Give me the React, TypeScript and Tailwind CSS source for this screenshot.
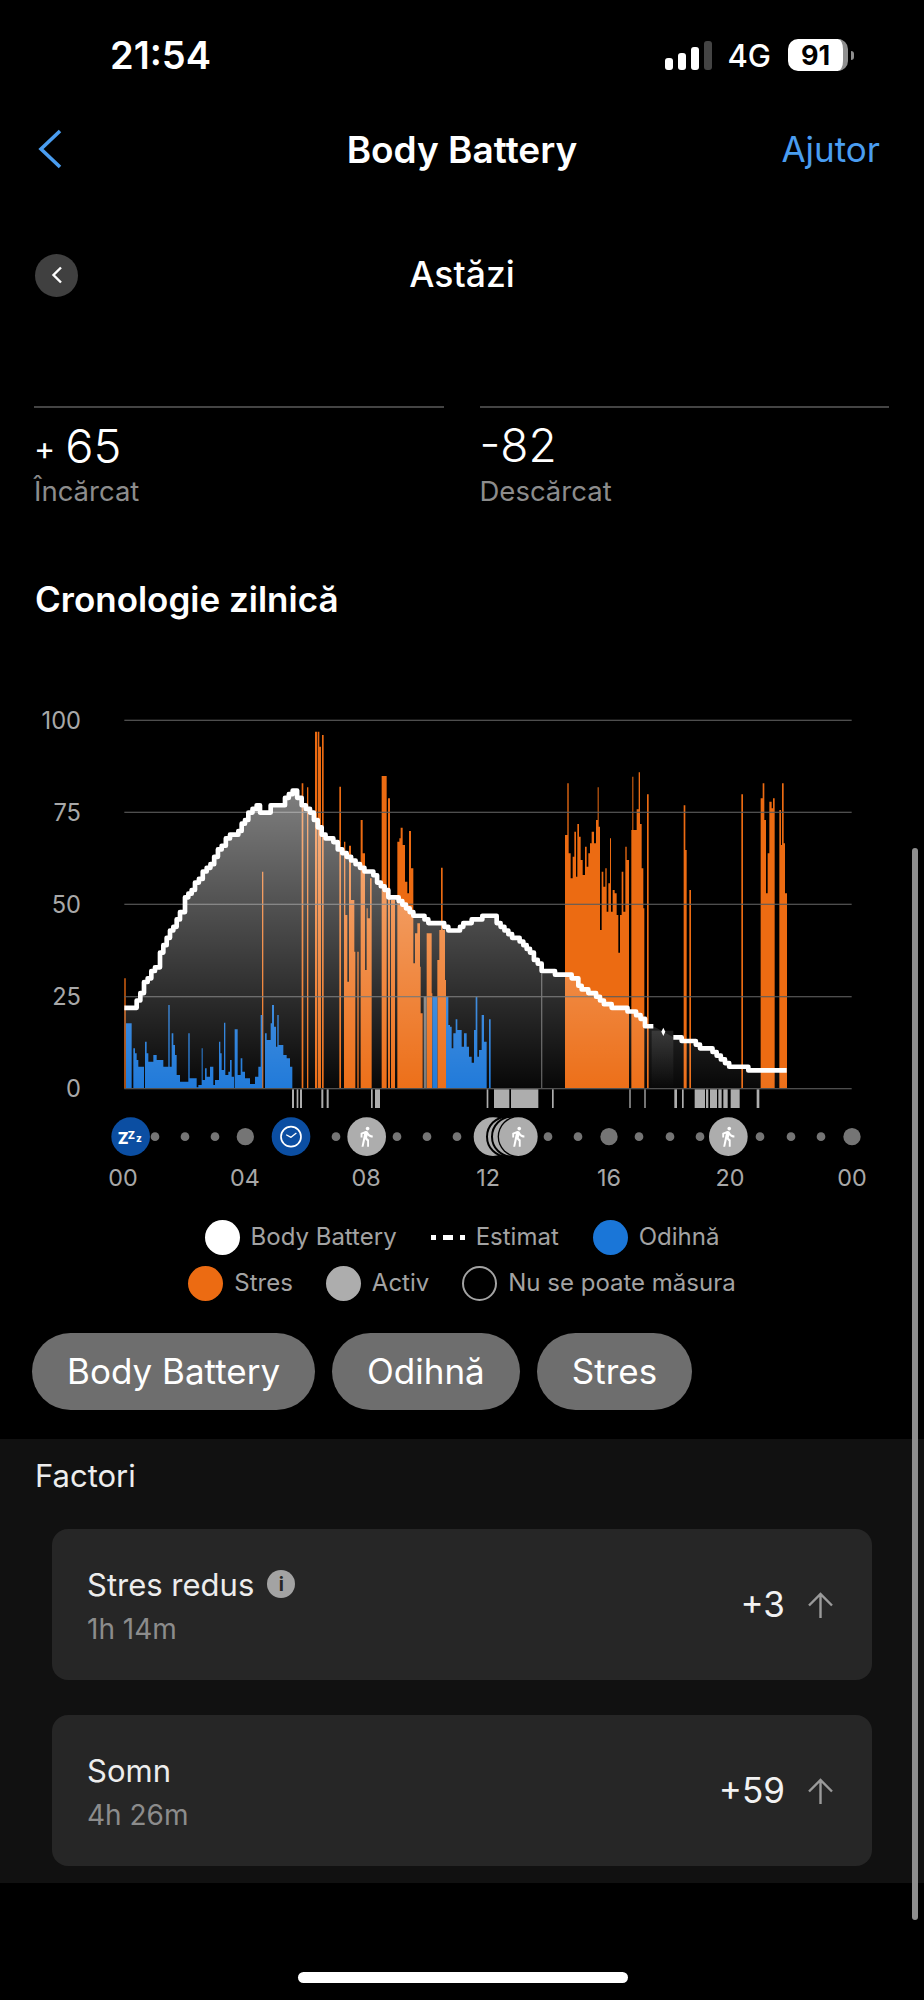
const BASE = 1226;
const R = 1380; // right half of the chart, offset in chart units

type Bar = [number, number, number];

const blue: Bar[] = [
  [378, 395, 1030], [400, 405, 1105], [405, 410, 1120], [410, 415, 1140], [415, 432, 1160], [435, 440, 1085], [440, 445, 1120],
  [445, 460, 1145], [460, 470, 1125], [470, 490, 1140], [490, 505, 1160], [505, 509, 975], [509, 515, 1160], [515, 520, 1060],
  [520, 525, 1095], [525, 530, 1125], [530, 540, 1185], [540, 565, 1205], [565, 569, 1060], [569, 590, 1195], [590, 595, 1222],
  [595, 605, 1215], [605, 608, 1105], [608, 615, 1200], [615, 620, 1165], [620, 630, 1190], [630, 640, 1160], [640, 645, 1215],
  [645, 657, 1200], [657, 661, 1085], [661, 665, 1120], [665, 672, 1170], [672, 676, 1028], [676, 685, 1185], [685, 690, 1175],
  [690, 695, 1140], [695, 702, 1190], [704, 713, 1048], [713, 722, 1185], [722, 727, 1135], [727, 735, 1175], [735, 750, 1195],
  [750, 765, 1212], [765, 775, 1190], [775, 782, 1160], [782, 787, 1005], [795, 800, 1060], [800, 812, 1080], [812, 816, 1030],
  [816, 822, 975], [822, 828, 1040], [828, 832, 1100], [832, 836, 1005], [836, 850, 1095], [850, 860, 1125], [860, 870, 1135],
  [870, 877, 1160], [1297, 1312, 950], [1338, 1345, 950], [1345, 1350, 1035], [1350, 1355, 1040], [1355, 1360, 1105],
  [1360, 1367, 1060], [1367, 1372, 1018], [1372, 1380, 1050],
  [R + 0, R + 5, 1050], [R + 5, R + 12, 1100], [R + 12, R + 20, 1060], [R + 20, R + 27, 1100], [R + 27, R + 35, 1130],
  [R + 35, R + 42, 1148], [R + 42, R + 47, 1050], [R + 47, R + 52, 950], [R + 52, R + 57, 1130], [R + 57, R + 65, 1110],
  [R + 65, R + 72, 1005], [R + 72, R + 80, 1085], [R + 87, R + 92, 1018],
];

const orange: Bar[] = [
  [373, 377, 895], [786, 790, 575], [905, 910, 310], [921, 925, 322], [945, 951, 155], [953, 958, 155], [958, 963, 200], [966, 971, 165],
  [1018, 1023, 320], [1032, 1036, 485], [1036, 1042, 705], [1042, 1047, 905], [1047, 1053, 497], [1053, 1063, 660], [1063, 1066, 815],
  [1072, 1076, 815], [1082, 1088, 420], [1088, 1095, 520], [1095, 1100, 870], [1100, 1103, 685], [1103, 1110, 715], [1110, 1115, 595],
  [1145, 1160, 288], [1164, 1170, 355], [1173, 1185, 660], [1192, 1198, 485], [1198, 1202, 475], [1202, 1208, 443], [1208, 1215, 495],
  [1215, 1222, 605], [1222, 1227, 640], [1227, 1233, 453], [1233, 1240, 565], [1240, 1245, 850], [1245, 1252, 760], [1252, 1260, 730],
  [1260, 1262, 860], [1262, 1268, 1000], [1280, 1295, 760], [1295, 1297, 940], [1312, 1318, 840], [1318, 1323, 750], [1323, 1328, 563],
  [1328, 1335, 750], [1335, 1338, 900],
  [R + 315, R + 322, 465], [R + 322, R + 326, 310], [R + 326, R + 332, 520], [R + 332, R + 338, 595], [R + 338, R + 343, 530],
  [R + 343, R + 348, 455], [R + 348, R + 352, 590], [R + 352, R + 357, 432], [R + 357, R + 362, 470], [R + 362, R + 368, 540],
  [R + 368, R + 375, 585], [R + 375, R + 380, 500], [R + 380, R + 385, 560], [R + 385, R + 390, 520], [R + 390, R + 395, 490],
  [R + 395, R + 402, 455], [R + 402, R + 408, 490], [R + 408, R + 413, 420], [R + 413, R + 416, 322], [R + 416, R + 420, 440],
  [R + 420, R + 425, 750], [R + 425, R + 430, 575], [R + 430, R + 436, 620], [R + 436, R + 440, 565], [R + 440, R + 445, 695],
  [R + 445, R + 450, 610], [R + 450, R + 453, 475], [R + 453, R + 458, 695], [R + 458, R + 464, 630], [R + 464, R + 470, 640],
  [R + 470, R + 475, 705], [R + 475, R + 480, 818], [R + 480, R + 485, 705], [R + 485, R + 490, 575], [R + 490, R + 496, 695],
  [R + 496, R + 500, 500], [R + 500, R + 507, 540], [R + 514, R + 517, 450], [R + 517, R + 520, 290], [R + 520, R + 530, 450],
  [R + 530, R + 536, 388], [R + 536, R + 540, 277], [R + 540, R + 545, 432], [R + 545, R + 550, 565], [R + 550, R + 553, 685],
  [R + 561, R + 566, 343], [R + 671, R + 676, 376], [R + 676, R + 680, 510], [R + 688, R + 693, 630], [R + 844, R + 849, 343],
  [R + 902, R + 908, 355], [R + 908, R + 913, 310], [R + 913, R + 918, 420], [R + 918, R + 923, 640], [R + 923, R + 928, 520],
  [R + 928, R + 935, 365], [R + 935, R + 939, 385], [R + 939, R + 944, 355], [R + 958, R + 963, 390], [R + 963, R + 966, 495],
  [R + 966, R + 971, 310], [R + 971, R + 975, 490], [R + 975, R + 981, 640],
];

const activeTicks: [number, number][] = [
  [876, 882], [890, 895], [900, 906], [964, 970], [980, 986], [1113, 1118], [1125, 1140],
  [R + 80, R + 85], [R + 102, R + 148], [R + 153, R + 235], [R + 276, R + 281], [R + 508, R + 512], [R + 553, R + 557],
  [R + 643, R + 651], [R + 666, R + 671], [R + 704, R + 735], [R + 738, R + 745], [R + 750, R + 771], [R + 775, R + 785],
  [R + 790, R + 803], [R + 812, R + 839], [R + 890, R + 898],
];

const lineA: [number, number][] = [
  [373, 983], [398, 983], [410, 965], [432, 910], [465, 860], [480, 815], [510, 755], [540, 695], [555, 655], [585, 610], [620, 565],
  [665, 495], [690, 465], [715, 453], [745, 400], [770, 378], [780, 398], [805, 398], [812, 377], [845, 375], [855, 350], [878, 330],
  [905, 372], [930, 395], [965, 460], [1000, 490], [1040, 530], [1080, 560], [1120, 590], [1165, 650], [1185, 652], [1240, 707],
  [1262, 707], [1285, 732], [1320, 732], [1345, 752], [1370, 752], [R + 0, 737], [R + 30, 730], [R + 35, 717], [R + 60, 717],
  [R + 67, 705], [R + 100, 705], [R + 110, 730], [R + 145, 760], [R + 190, 795], [R + 210, 820], [R + 245, 872], [R + 280, 872],
  [R + 285, 884], [R + 315, 884], [R + 345, 900], [R + 365, 930], [R + 385, 935], [R + 420, 962], [R + 455, 983], [R + 490, 985],
  [R + 515, 995], [R + 555, 1035], [R + 580, 1047],
];
const lineB: [number, number][] = [
  [R + 640, 1070], [R + 665, 1082], [R + 695, 1085], [R + 720, 1102], [R + 745, 1102], [R + 795, 1150], [R + 820, 1160], [R + 860, 1160],
  [R + 865, 1170], [R + 980, 1170],
];

// the line moves by whole values, so it reads as a staircase
function stairs(pts: [number, number][]) {
  const step = 11.05;
  const out: [number, number][] = [];
  for (let i = 0; i < pts.length - 1; i++) {
    const [x0, y0] = pts[i];
    const [x1, y1] = pts[i + 1];
    const n = Math.max(1, Math.round((x1 - x0) / 12));
    for (let k = 0; k < n; k++) {
      const x = x0 + ((x1 - x0) * k) / n;
      const y = Math.round((y0 + ((y1 - y0) * k) / n) / step) * step;
      if (out.length) out.push([x, out[out.length - 1][1]]);
      out.push([x, y]);
    }
  }
  const last = pts[pts.length - 1];
  out.push([last[0], out[out.length - 1][1]]);
  return out;
}

const stairA = stairs(lineA);
const stairB = stairs(lineB);
const toPoints = (p: [number, number][]) => p.map(([x, y]) => `${x.toFixed(1)},${y.toFixed(1)}`).join(" ");
const areaPoints = `373,${BASE} ${toPoints(stairA)} ${toPoints(stairB)} ${R + 980},${BASE}`;
// one path per colour, so neighbouring columns leave no seam
const barPath = (bars: Bar[]) => bars.map(([a, b, top]) => `M${a} ${BASE}V${top}H${b}V${BASE}Z`).join("");

const yLabels: [string, number][] = [["100", 121], ["75", 397], ["50", 673], ["25", 950], ["0", 1226]];
const xLabels: [string, number][] = [["00", 369], ["04", 735], ["08", 1098], ["12", 1464], ["16", 1827], ["20", 2190], ["00", 2556]];
const smallDots = [465, 555, 645, 1008, 1191, 1281, 1371, 1644, 1734, 1917, 2010, 2100, 2280, 2373, 2463];
const bigDots = [736, 1827, 2556];

function WalkMarker({ x }: { x: number }) {
  return (
    <g>
      <circle cx={x} cy={1370} r={58} fill="#adadad" />
      <path
        transform={`translate(${x - 35},${1370 - 34}) scale(2.8)`}
        fill="#fff"
        d="M13.5 5.5c1.1 0 2-.9 2-2s-.9-2-2-2-2 .9-2 2 .9 2 2 2zM9.8 8.9L7 23h2.1l1.8-8 2.1 2v6h2v-7.5l-2.1-2 .6-3C14.8 12 16.8 13 19 13v-2c-1.9 0-3.5-1-4.3-2.4l-1-1.6c-.4-.6-1-1-1.7-1-.3 0-.5.1-.8.1L6 8.3V13h2V9.6l1.8-.7"
      />
    </g>
  );
}

function Chart() {
  return (
    <svg viewBox="0 0 2772 1560" className="block w-[924px] h-[520px] shrink-0">
      <defs>
        <linearGradient id="area" gradientUnits="userSpaceOnUse" x1="0" y1="330" x2="0" y2={BASE}>
          <stop offset="0" stopColor="#fff" stopOpacity="0.5" />
          <stop offset="1" stopColor="#fff" stopOpacity="0.03" />
        </linearGradient>
        <linearGradient id="gap" gradientUnits="userSpaceOnUse" x1="0" y1="1052" x2="0" y2={BASE}>
          <stop offset="0" stopColor="#fff" stopOpacity="0.12" />
          <stop offset="1" stopColor="#fff" stopOpacity="0" />
        </linearGradient>
      </defs>

      <path d={barPath(orange)} fill="#ec6b12" />
      <path d={barPath(blue)} fill="#1a76d8" />
      <rect x={1271} y={950} width={9} height={276} fill="#777" />
      <rect x={R + 243} y={880} width={4} height={346} fill="#555" />

      {yLabels.map(([label, y]) => (
        <g key={label}>
          <rect x={373} y={y - 2} width={2182} height={4} fill={y === BASE ? "#4d4d4d" : "#5c5c5c"} fillOpacity={y === BASE ? 1 : 0.85} />
          <text x={243} y={y + 25} textAnchor="end" fontSize={71} fill="#a8a8a8">
            {label}
          </text>
        </g>
      ))}

      <polygon points={areaPoints} fill="url(#area)" />
      <rect x={1955} y={1052} width={65} height={174} fill="url(#gap)" />

      <g fill="none" stroke="#fff" strokeWidth={14} strokeLinejoin="round">
        <polyline points={toPoints(stairA)} />
        <polyline points={toPoints(stairB)} />
      </g>
      <path d="M1990 1043L1996 1055L1990 1068L1984 1055Z" fill="#fff" />

      {activeTicks.map(([a, b]) => (
        <rect key={`t${a}`} x={a} y={BASE + 2} width={b - a} height={56} fill="#adadad" />
      ))}

      {smallDots.map((x) => (
        <circle key={x} cx={x} cy={1370} r={13} fill="#757575" />
      ))}
      {bigDots.map((x) => (
        <circle key={x} cx={x} cy={1370} r={26} fill="#757575" />
      ))}

      <circle cx={392} cy={1370} r={58} fill="#0b4ea2" />
      <text x={353} y={1392} fontSize={48} fontWeight={800} fill="#fff">Z</text>
      <text x={383} y={1378} fontSize={32} fontWeight={800} fill="#fff">Z</text>
      <text x={408} y={1385} fontSize={30} fontWeight={800} fill="#fff">z</text>

      <circle cx={873} cy={1370} r={58} fill="#0b4ea2" />
      <circle cx={873} cy={1370} r={30} fill="none" stroke="#fff" strokeWidth={5} />
      <path d="M860 1365L873 1372L888 1360" fill="none" stroke="#fff" strokeWidth={4} strokeLinecap="round" strokeLinejoin="round" />

      <WalkMarker x={1100} />
      <circle cx={1479} cy={1370} r={58} fill="#adadad" />
      <circle cx={1521} cy={1370} r={60} fill="#adadad" stroke="#000" strokeWidth={6} />
      <circle cx={1536} cy={1370} r={60} fill="#adadad" stroke="#000" strokeWidth={6} />
      <circle cx={1555} cy={1370} r={62} fill="#000" />
      <WalkMarker x={1555} />
      <WalkMarker x={2185} />

      {xLabels.map(([label, x]) => (
        <text key={x} x={x} y={1518} textAnchor="middle" fontSize={70} fill="#a8a8a8">
          {label}
        </text>
      ))}
    </svg>
  );
}

function Legend({ label, dot }: { label: string; dot: string }) {
  return (
    <div className="flex items-center gap-[11px]">
      <span className={`w-[35px] h-[35px] rounded-full ${dot}`} />
      <span className="text-[24px] text-[#a3a3a3] leading-none">{label}</span>
    </div>
  );
}

function Factor({ title, time, value, info }: { title: string; time: string; value: string; info?: boolean }) {
  return (
    <div className="h-[151px] rounded-[16px] bg-[#262626] pl-[35px] pr-[38px] flex items-center justify-between">
      <div className="flex flex-col gap-[13px] mt-[4px]">
        <div className="flex items-center gap-[13px] h-[32px]">
          <span className="text-[31px] leading-none text-[#ededed]">{title}</span>
          {info && (
            <span className="w-[28px] h-[28px] rounded-full bg-[#a3a3a3] flex items-center justify-center text-[19px] font-bold leading-none text-[#262626]">
              i
            </span>
          )}
        </div>
        <span className="text-[28px] leading-[32px] text-[#8c8c8c]">{time}</span>
      </div>
      <div className="flex items-center gap-[22px]">
        <span className="text-[35px] leading-none text-[#f2f2f2]">{value}</span>
        <svg width="27" height="26" viewBox="0 0 27 26" fill="none" stroke="#9a9a9a" strokeWidth="2.4">
          <path d="M13.5 26V2M2 13.5L13.5 2L25 13.5" />
        </svg>
      </div>
    </div>
  );
}

export default function App() {
  return (
    <div className="relative w-[924px] h-[2000px] overflow-hidden bg-black text-white flex flex-col [font-family:Inter,sans-serif]">
      {/* Status bar */}
      <div className="h-[110px] shrink-0 pl-[110px] pr-[70px] flex items-center justify-between">
        <span className="text-[38px] font-semibold leading-none">21:54</span>
        <div className="flex items-center">
          <div className="flex items-end gap-[5px] h-[30px]">
            <span className="w-[8px] h-[12px] rounded-[3px] bg-white" />
            <span className="w-[8px] h-[17px] rounded-[3px] bg-white" />
            <span className="w-[8px] h-[23px] rounded-[3px] bg-white" />
            <span className="w-[8px] h-[29px] rounded-[3px] bg-[#444]" />
          </div>
          <span className="ml-[15px] text-[31px] font-medium leading-none">4G</span>
          <div className="ml-[17px] flex items-center">
            <div className="w-[60px] h-[32px] rounded-[10px] bg-white border-r-[5px] border-[#8f8f8f] flex items-center justify-center text-black text-[27px] font-bold leading-none">
              91
            </div>
            <span className="ml-[3px] w-[3px] h-[9px] rounded-r-[3px] bg-[#8f8f8f]" />
          </div>
        </div>
      </div>

      {/* Nav */}
      <div className="h-[78px] shrink-0 px-[44px] grid grid-cols-[1fr_auto_1fr] items-center">
        <svg width="24" height="40" viewBox="0 0 24 40" fill="none" stroke="#4a9df0" strokeWidth="3.6" className="-ml-[6px]">
          <path d="M22 2L3 20L22 38" />
        </svg>
        <span className="text-[37px] font-semibold leading-none">Body Battery</span>
        <span className="justify-self-end text-[35px] leading-none text-[#4a9df0]">Ajutor</span>
      </div>

      {/* Day selector */}
      <div className="mt-[52px] h-[70px] shrink-0 px-[35px] grid grid-cols-[1fr_auto_1fr] items-center">
        <div className="w-[43px] h-[43px] rounded-full bg-[#404040] flex items-center justify-center">
          <svg width="12" height="18" viewBox="0 0 12 18" fill="none" stroke="#fff" strokeWidth="2.4">
            <path d="M10 1.5L2.5 9L10 16.5" />
          </svg>
        </div>
        <span className="text-[35.5px] font-medium leading-none">Astăzi</span>
      </div>

      {/* Charged / drained */}
      <div className="mt-[96px] shrink-0 pl-[34px] pr-[35px] grid grid-cols-2 gap-[36px]">
        <div className="border-t-2 border-[#444] pt-[13px]">
          <div className="h-[48px] flex items-center">
            <span className="text-[32px] leading-none mr-[10px] mt-[8px]">+</span>
            <span className="text-[47px] font-light leading-none">65</span>
          </div>
          <div className="mt-[6px] text-[27.5px] leading-[32px] text-[#8c8c8c]">Încărcat</div>
        </div>
        <div className="border-t-2 border-[#444] pt-[13px]">
          <div className="h-[48px] flex items-center">
            <span className="text-[46px] font-light leading-none">-82</span>
          </div>
          <div className="mt-[6px] text-[27.5px] leading-[32px] text-[#8c8c8c]">Descărcat</div>
        </div>
      </div>

      <div className="mt-[72px] h-[40px] shrink-0 pl-[35px] flex items-center text-[35px] font-semibold leading-none">Cronologie zilnică</div>

      <div className="mt-[61px]">
        <Chart />
      </div>

      {/* Legend */}
      <div className="mt-[19px] flex flex-col gap-[10px] shrink-0">
        <div className="h-[36px] flex items-center justify-center gap-[34px]">
          <Legend label="Body Battery" dot="bg-white" />
          <div className="flex items-center gap-[11px]">
            <div className="flex items-center gap-[7px]">
              <span className="w-[5px] h-[5px] bg-white" />
              <span className="w-[10px] h-[5px] bg-white" />
              <span className="w-[5px] h-[5px] bg-white" />
            </div>
            <span className="text-[24px] text-[#a3a3a3] leading-none">Estimat</span>
          </div>
          <Legend label="Odihnă" dot="bg-[#1a76d8]" />
        </div>
        <div className="h-[36px] flex items-center justify-center gap-[33px]">
          <Legend label="Stres" dot="bg-[#ec6b12]" />
          <Legend label="Activ" dot="bg-[#adadad]" />
          <Legend label="Nu se poate măsura" dot="border-2 border-[#a3a3a3]" />
        </div>
      </div>

      {/* Tabs */}
      <div className="mt-[32px] pl-[32px] h-[77px] shrink-0 flex gap-[17px]">
        {["Body Battery", "Odihnă", "Stres"].map((t) => (
          <div key={t} className="h-full px-[35px] rounded-full bg-[#6e6e6e] flex items-center text-[35px] leading-none">
            {t}
          </div>
        ))}
      </div>

      {/* Factors */}
      <div className="mt-[29px] h-[444px] shrink-0 bg-[#111] pt-[18px]">
        <div className="pl-[35px] h-[36px] flex items-center text-[31px] leading-none text-[#ededed]">Factori</div>
        <div className="mt-[36px] ml-[52px] w-[820px] flex flex-col gap-[35px]">
          <Factor title="Stres redus" time="1h 14m" value="+3" info />
          <Factor title="Somn" time="4h 26m" value="+59" />
        </div>
      </div>

      {/* Scrollbar and home indicator lie over the page */}
      <div className="absolute left-[912px] top-[848px] w-[6px] h-[1072px] rounded-full bg-[#8e8e8e]" />
      <div className="absolute left-[298px] top-[1972px] w-[330px] h-[11px] rounded-full bg-white" />
    </div>
  );
}
